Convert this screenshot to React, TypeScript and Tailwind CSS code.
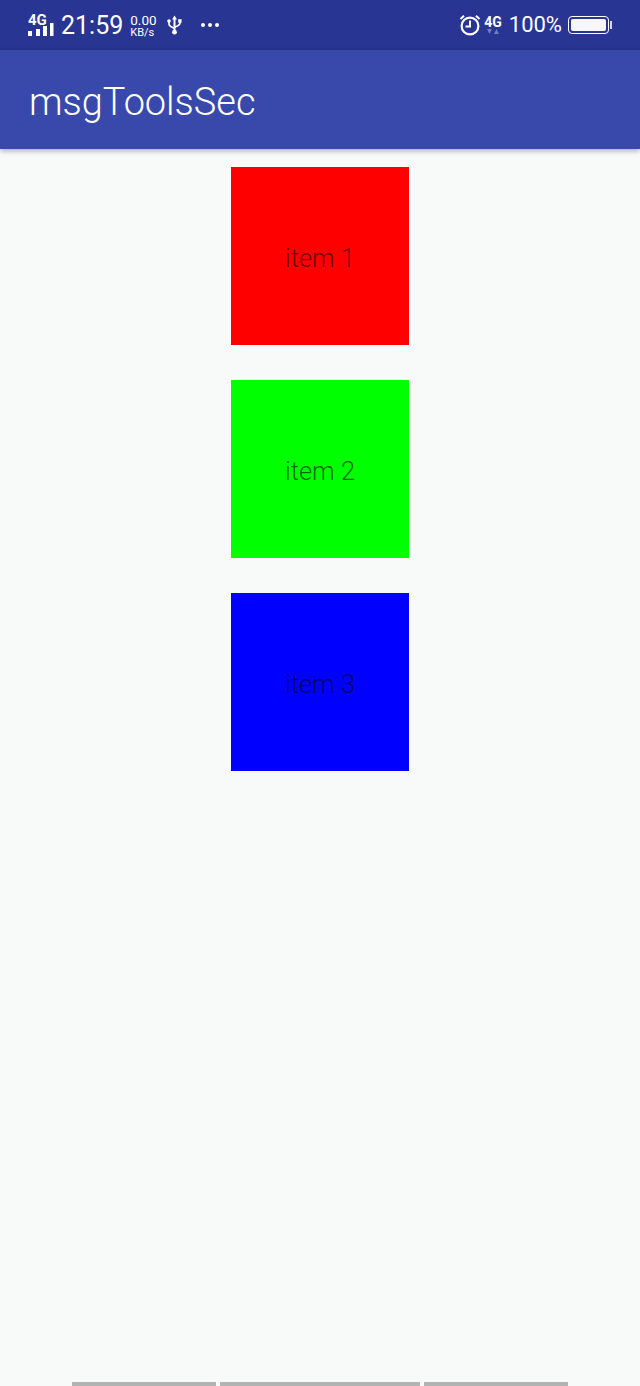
const font = "[font-family:Roboto,'Liberation_Sans',sans-serif]"

const items = [
  { label: 'item 1', color: 'bg-[#ff0000]' },
  { label: 'item 2', color: 'bg-[#00ff00]' },
  { label: 'item 3', color: 'bg-[#0000ff]' },
]

function SignalBars() {
  return (
    <svg width="26" height="13" viewBox="0 0 26 13" className="block">
      <rect x="0" y="8" width="4" height="5" fill="#fff" />
      <rect x="8" y="6" width="4" height="7" fill="#fff" />
      <rect x="15" y="3" width="4" height="10" fill="#fff" />
      <rect x="22" y="0" width="3.5" height="13" fill="#fff" />
    </svg>
  )
}

function UsbIcon() {
  return (
    <svg width="15" height="20" viewBox="0 0 15 20" fill="none" className="block">
      <path d="M7.5 0.5 5 4.5h5z" fill="#fff" />
      <path d="M7.5 4v12" stroke="#fff" strokeWidth="2" />
      <path d="M2 7v2c0 1.6 1 2.2 2.2 2.8l3.3 1.7" stroke="#fff" strokeWidth="1.7" />
      <path d="M13 7v1c0 1.5-1 2.1-2.2 2.7l-3.3 1.5" stroke="#fff" strokeWidth="1.7" />
      <circle cx="2" cy="6" r="1.8" fill="#fff" />
      <rect x="11.2" y="4.2" width="3.4" height="3.4" fill="#fff" />
      <circle cx="7.5" cy="17.2" r="2.4" fill="#fff" />
    </svg>
  )
}

function AlarmIcon() {
  return (
    <svg width="22" height="22" viewBox="0 0 22 22" fill="none" className="block">
      <circle cx="11" cy="12" r="8.4" stroke="#fff" strokeWidth="2.2" />
      <path d="M11 6.5v6H6.5" stroke="#fff" strokeWidth="2" />
      <path d="M1.5 5 5 1.8M20.5 5 17 1.8" stroke="#fff" strokeWidth="2" />
    </svg>
  )
}

function BatteryIcon() {
  return (
    <div className="flex items-center">
      <div className="h-[18px] w-[41px] rounded-[4px] border border-white p-[2px]">
        <div className="h-full w-full rounded-[2px] bg-[#f6f6fb]" />
      </div>
      <div className="ml-px h-[8px] w-[2px] bg-white/80" />
    </div>
  )
}

export default function App() {
  return (
    <div className={`flex h-[1386px] w-[640px] flex-col overflow-hidden bg-[#f8f9f9] ${font}`}>
      {/* Status bar */}
      <div className="flex h-[50px] shrink-0 items-center justify-between bg-[#283593] pl-[28px] pr-[28px] text-white">
        <div className="flex items-center">
          <div className="relative flex h-[22px] w-[26px] flex-col items-start justify-end pt-[2px]">
            <span className="absolute left-[0px] top-[-1px] text-[15px] font-bold leading-[14px]">4G</span>
            <SignalBars />
          </div>
          <span className="ml-[7px] mt-[1px] text-[25px] leading-none">21:59</span>
          <div className="ml-[7px] mt-[1px] flex flex-col items-start">
            <span className="text-[13.5px] leading-[13px]">0.00</span>
            <span className="text-[11px] leading-[11px]">KB/s</span>
          </div>
          <div className="ml-[10px]">
            <UsbIcon />
          </div>
          <div className="ml-[19px] flex gap-[3px]">
            <div className="h-[4px] w-[4px] rounded-full bg-white" />
            <div className="h-[4px] w-[4px] rounded-full bg-white" />
            <div className="h-[4px] w-[4px] rounded-full bg-white" />
          </div>
        </div>
        <div className="flex items-center">
          <AlarmIcon />
          <div className="ml-[3px] flex flex-col items-center">
            <span className="text-[14px] font-bold leading-[14px]">4G</span>
            <svg width="14" height="6" viewBox="0 0 14 6" className="block">
              <path d="M1 0h5L3.5 5z" fill="#fff" fillOpacity="0.35" />
              <path d="M8 5h5l-2.5-5z" fill="#fff" fillOpacity="0.35" />
            </svg>
          </div>
          <span className="ml-[7px] text-[22px] leading-none">100%</span>
          <div className="ml-[6px]">
            <BatteryIcon />
          </div>
        </div>
      </div>

      {/* App bar */}
      <div className="z-10 flex h-[99px] shrink-0 items-center bg-[#3949ab] pl-[29px] pt-[6px] shadow-[0_2px_5px_rgba(0,0,0,0.3)]">
        <h1 className="text-[37.9px] font-light leading-none text-white">msgToolsSec</h1>
      </div>

      {/* Items */}
      <div className="flex flex-1 flex-col items-center gap-[35px] pt-[18px]">
        {items.map((item) => (
          <div
            key={item.label}
            className={`flex h-[178px] w-[178px] items-center justify-center pt-[4px] ${item.color}`}
          >
            <span className="text-[25.5px] font-light text-black/60">{item.label}</span>
          </div>
        ))}
      </div>

      {/* Bottom bars */}
      <div className="flex h-[4px] shrink-0 justify-center gap-[4px]">
        <div className="w-[144px] bg-[#b3b3b3]" />
        <div className="w-[200px] bg-[#b3b3b3]" />
        <div className="w-[144px] bg-[#b3b3b3]" />
      </div>
    </div>
  )
}
